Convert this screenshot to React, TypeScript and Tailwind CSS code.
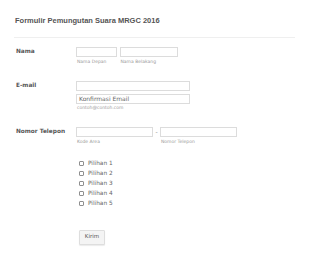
import React from "react";

const body = { fontFamily: '"DejaVu Sans", Verdana, sans-serif' } as const;

function Input({ w, placeholder }: { w: string; placeholder?: string }) {
  return (
    <div className={`${w} h-[10px] border border-[#dcdcdc] bg-white flex items-center pl-[2px] text-[6px] text-[#666] leading-none`}>
      {placeholder}
    </div>
  );
}

function Label({ children }: { children: React.ReactNode }) {
  return (
    <div className="w-[62px] shrink-0 pl-[2px] h-[10px] flex items-center text-[5.8px] font-bold text-[#555] leading-none whitespace-nowrap">
      {children}
    </div>
  );
}

function Sub({ children }: { children: React.ReactNode }) {
  return <div className="mt-[1.5px] pl-[1px] leading-[6px] text-[4.5px] text-[#9a9a9a] whitespace-nowrap">{children}</div>;
}

export default function App() {
  return (
    <div className="w-[310px] h-[259px] bg-white px-[14px] pt-[16px] overflow-hidden" style={body}>
      <h2
        className="leading-[10px] text-[7.5px] font-bold text-[#555] pl-[1px]"
        style={{ fontFamily: '"Liberation Sans", Arial, sans-serif' }}
      >
        Formulir Pemungutan Suara MRGC 2016
      </h2>
      <div className="mt-[11px] mr-[1px] border-t border-[#efefef]" />

      <div className="mt-[9px] flex">
        <Label>Nama</Label>
        <div className="flex gap-[2.5px]">
          <div>
            <Input w="w-[41px]" />
            <Sub>Nama Depan</Sub>
          </div>
          <div>
            <Input w="w-[58px]" />
            <Sub>Nama Belakang</Sub>
          </div>
        </div>
      </div>

      <div className="mt-[16px] flex">
        <Label>E-mail</Label>
        <div>
          <Input w="w-[114px]" />
          <div className="mt-[3px]">
            <Input w="w-[114px]" placeholder="Konfirmasi Email" />
          </div>
          <Sub>contoh@contoh.com</Sub>
        </div>
      </div>

      <div className="mt-[16px] flex">
        <Label>Nomor Telepon</Label>
        <div className="flex">
          <div>
            <Input w="w-[77px]" />
            <Sub>Kode Area</Sub>
          </div>
          <div className="w-[7px] h-[10px] flex items-center justify-center text-[6px] text-[#888] leading-none">-</div>
          <div>
            <Input w="w-[77px]" />
            <Sub>Nomor Telepon</Sub>
          </div>
        </div>
      </div>

      <div className="mt-[14px] pl-[65px] flex flex-col">
        {[1, 2, 3, 4, 5].map((n) => (
          <div key={n} className="h-[10px] flex items-center">
            <div className="w-[5px] h-[5px] border border-[#8f8f8f] rounded-[1px] bg-white" />
            <span className="ml-[4px] text-[5.8px] text-[#666] leading-none">Pilihan {n}</span>
          </div>
        ))}
      </div>

      <div className="mt-[21px] pl-[65px]">
        <div className="w-[26px] h-[15px] border border-[#dedede] bg-[#f4f4f4] rounded-[1px] flex items-center justify-center text-[5.5px] text-[#555] leading-none shadow-[0_1px_1px_rgba(0,0,0,0.08)]">
          Kirim
        </div>
      </div>
    </div>
  );
}
